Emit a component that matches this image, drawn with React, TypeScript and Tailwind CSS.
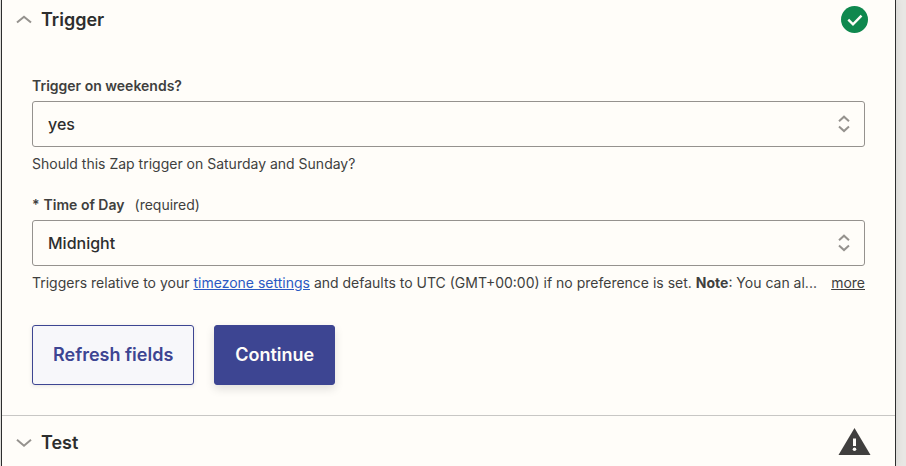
import { useState, type ReactNode } from "react";

type StepHeaderProps = {
  title: string;
  open: boolean;
  status: ReactNode;
  className: string;
};

function StepHeader({ title, open, status, className }: StepHeaderProps) {
  return (
    <h2 className={className}>
      <button type="button" aria-expanded={open} className="flex flex-1 items-center gap-2 text-left text-lg font-semibold text-[#2d2e2e]">
        <svg width="18" height="18" viewBox="0 0 18 18" fill="none" stroke="#95928e" strokeWidth="2" aria-hidden="true">
          <path d={open ? "M2 11.6 9 5.7l7 5.9" : "M2 5.8 9 11.7l7-5.9"} />
        </svg>
        {title}
      </button>
      {status}
    </h2>
  );
}

type SelectFieldProps = {
  id: string;
  label: ReactNode;
  options: string[];
  help: ReactNode;
};

function SelectField({ id, label, options, help }: SelectFieldProps) {
  const [value, setValue] = useState(options[0]);
  return (
    <div>
      <label htmlFor={id} className="block text-sm leading-5 font-semibold text-[#403f3e]">
        {label}
      </label>
      <div className="mt-[5px] grid items-center">
        <select
          id={id}
          value={value}
          onChange={(e) => setValue(e.target.value)}
          className="col-start-1 row-start-1 h-[46px] w-full appearance-none rounded-[3px] border border-[#95928e] bg-[#fffdf9] px-[15px] text-base font-medium text-[#2d2e2e]"
        >
          {options.map((option) => (
            <option key={option}>{option}</option>
          ))}
        </select>
        <svg
          className="pointer-events-none col-start-1 row-start-1 mr-3.5 justify-self-end"
          width="14"
          height="20"
          viewBox="0 0 14 20"
          fill="none"
          stroke="#95928e"
          strokeWidth="2"
          aria-hidden="true"
        >
          <path d="M2 7.2 7 2.7l5 4.5M2 12.6l5 4.5 5-4.5" />
        </svg>
      </div>
      <div className="mt-[7px] text-sm leading-5 text-[#403f3e]">{help}</div>
    </div>
  );
}

function TimeHelp() {
  const [expanded, setExpanded] = useState(false);
  return (
    <div className="flex items-start justify-between">
      <p className={expanded ? "" : "whitespace-nowrap"}>
        Triggers relative to your{" "}
        <a href="#timezone" className="text-[#2b59c3] underline">
          timezone settings
        </a>{" "}
        and defaults to UTC (GMT+00:00) if no preference is set. <b>Note</b>: You can {expanded ? "also change the timezone of a single Zap." : "al..."}
      </p>
      <button type="button" onClick={() => setExpanded(!expanded)} className="underline">
        {expanded ? "less" : "more"}
      </button>
    </div>
  );
}

export default function App() {
  return (
    <div className="h-screen overflow-hidden bg-[#e8e7e4] pr-2.5 pl-px font-['Inter',sans-serif]">
      <main className="h-full border-x border-[#2d2e2e] bg-[#fffdf9] shadow-[0_0_8px_rgba(0,0,0,0.1)]">
        <section>
          <StepHeader
            title="Trigger"
            open
            className="flex h-10 items-center pr-[26px] pl-[13px]"
            status={
              <svg width="28" height="28" viewBox="0 0 28 28" role="img" aria-label="Complete">
                <circle cx="13.5" cy="13.5" r="13.5" fill="#0f884e" />
                <path d="m7.3 13.6 4.7 4.7 8.5-8.6" fill="none" stroke="#fffdf9" strokeWidth="2.4" />
              </svg>
            }
          />
          <form className="px-[30px] pt-9 pb-[30px]" onSubmit={(e) => e.preventDefault()}>
            <div className="flex flex-col gap-[21px]">
              <SelectField
                id="weekends"
                label="Trigger on weekends?"
                options={["yes", "no"]}
                help="Should this Zap trigger on Saturday and Sunday?"
              />
              <SelectField
                id="time-of-day"
                label={
                  <>
                    <span className="mr-1">*</span>
                    Time of Day
                    <span className="ml-2.5 font-normal">(required)</span>
                  </>
                }
                options={["Midnight", "Noon"]}
                help={<TimeHelp />}
              />
            </div>
            <div className="mt-8 flex gap-5 text-lg font-semibold">
              <button type="button" className="h-[60px] rounded-[3px] border border-[#3d4592] bg-[#f7f7fa] px-5 text-[#3d4592] shadow-[0_1px_4px_rgba(0,0,0,0.1)]">
                Refresh fields
              </button>
              <button type="submit" className="h-[60px] rounded-[3px] border border-[#3d4592] bg-[#3d4592] px-5 text-[#fffdf9] shadow-[0_4px_10px_rgba(0,0,0,0.12)]">
                Continue
              </button>
            </div>
          </form>
        </section>
        <section className="border-t border-[#c8c7c5]">
          <StepHeader
            title="Test"
            open={false}
            className="flex h-[54px] items-center pr-6 pl-[13px]"
            status={
              <svg width="33" height="30" viewBox="0 0 33 30" role="img" aria-label="Needs attention">
                <path d="M16.5 0 32.5 27H.5Z" fill="#403f3e" />
                <path d="M15 10.5h3v7.5h-3z" fill="#fffdf9" />
                <circle cx="16.5" cy="21.2" r="1.8" fill="#fffdf9" />
              </svg>
            }
          />
        </section>
      </main>
    </div>
  );
}
